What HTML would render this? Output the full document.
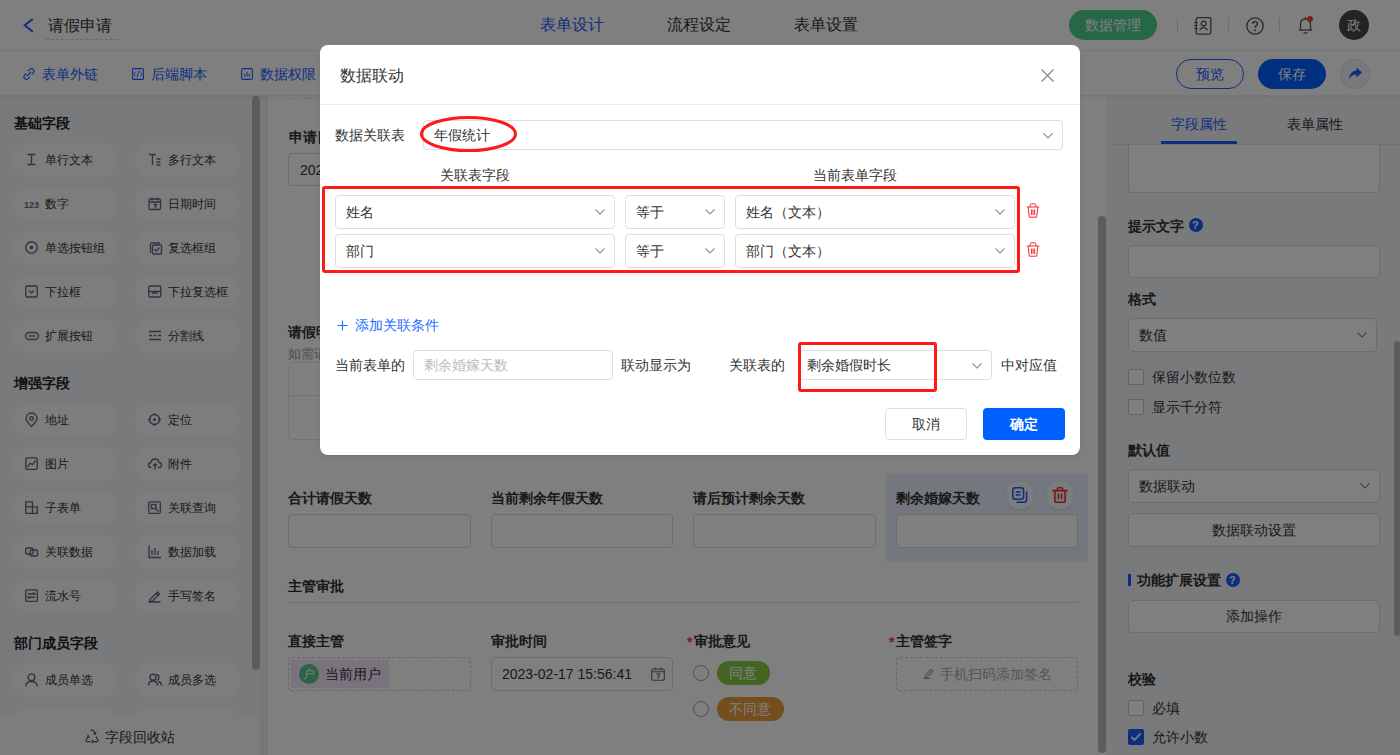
<!DOCTYPE html>
<html><head><meta charset="utf-8">
<style>
*{box-sizing:border-box;margin:0;padding:0}
html,body{width:1400px;height:755px;overflow:hidden;background:#fff;font-family:"Liberation Sans",sans-serif;color:#333}
.a{position:absolute}
.t{position:absolute;white-space:nowrap;line-height:14px;font-size:14px}
.b{font-weight:bold}
svg{position:absolute;overflow:visible}
#header{left:0;top:0;width:1400px;height:50px;background:#fff}
#toolbar{left:0;top:50px;width:1400px;height:46px;background:#fff}
#left{left:0;top:96px;width:260px;height:659px;background:#f3f4f7}
#strip{left:260px;top:96px;width:8px;height:659px;background:#eceef3}
#canvas{left:268px;top:96px;width:838px;height:659px;background:#fff}
#right{left:1106px;top:96px;width:294px;height:659px;background:#f3f4f7}
.pill{position:absolute;width:105px;height:34px;border-radius:17px;background:#fbfbfc}
.pill .t{font-size:12px;line-height:12px;left:33px;top:11px;color:#333}
.pill svg{left:13px;top:10px}
.sec{position:absolute;left:14px;font-size:14px;font-weight:bold;line-height:14px;color:#222}
.inp{position:absolute;border:1px solid #d9d9d9;border-radius:4px;background:#fff}
.mask{position:absolute;left:0;top:0;width:1400px;height:755px;background:rgba(0,0,0,.5)}
#modal{left:320px;top:45px;width:760px;height:410px;background:#fff;border-radius:8px;box-shadow:0 2px 4px -1px rgba(0,0,0,.12)}
.sel{position:absolute;border:1px solid #dedede;border-radius:4px;background:#fff}
</style></head><body>

<!-- HEADER -->
<div id="header" class="a">
  <svg style="left:23px;top:18px" width="11" height="15" viewBox="0 0 11 15"><path d="M9.8 1 L1.8 7.3 L9.8 13.8" fill="none" stroke="#1a5cff" stroke-width="2.1"/></svg>
  <div class="t" style="left:48px;top:18px;font-size:16px;line-height:16px;color:#333">请假申请</div>
  <div class="a" style="left:46px;top:39px;width:72px;border-top:1px dashed #d4d4d4"></div>
  <div class="t" style="left:540px;top:17px;font-size:16px;line-height:16px;color:#1a5cff">表单设计</div>
  <div class="t" style="left:667px;top:17px;font-size:16px;line-height:16px;color:#333">流程设定</div>
  <div class="t" style="left:794px;top:17px;font-size:16px;line-height:16px;color:#333">表单设置</div>
  <div class="a" style="left:1069px;top:10px;width:88px;height:30px;border-radius:15px;background:#4ccf8f"></div>
  <div class="t" style="left:1085px;top:18px;color:#fff">数据管理</div>
  <div class="a" style="left:1177px;top:18px;width:1px;height:14px;background:#d9d9d9"></div>
  <svg style="left:1194px;top:17px" width="18" height="18" viewBox="0 0 18 18"><rect x="2.2" y="0.7" width="14.6" height="16.4" rx="1.6" fill="none" stroke="#555" stroke-width="1.3"/><circle cx="9.6" cy="6.6" r="2.4" fill="none" stroke="#555" stroke-width="1.3"/><path d="M5.6 13.2Q9.6 7.8 13.6 13.2" fill="none" stroke="#555" stroke-width="1.3"/><path d="M0.2 5.5h3.4M0.2 8.5h3.4M0.2 11.5h3.4" stroke="#555" stroke-width="1.2"/></svg>
  <div class="a" style="left:1228px;top:18px;width:1px;height:14px;background:#d9d9d9"></div>
  <svg style="left:1246px;top:17px" width="18" height="18" viewBox="0 0 18 18"><circle cx="9" cy="9" r="8.2" fill="none" stroke="#555" stroke-width="1.3"/><path d="M6.6 7 Q6.6 4.6 9 4.6 Q11.4 4.6 11.4 6.8 Q11.4 8.3 9.8 9 Q9 9.4 9 10.8" fill="none" stroke="#555" stroke-width="1.4"/><circle cx="9" cy="13.2" r="0.95" fill="#555"/></svg>
  <div class="a" style="left:1279px;top:18px;width:1px;height:14px;background:#d9d9d9"></div>
  <svg style="left:1298px;top:16px" width="16" height="18" viewBox="0 0 16 18"><path d="M7.5 1v1.5M2.5 14V8.5Q2.5 3 7.5 3Q12.5 3 12.5 8.5V14M0.8 14.2H14.2M5.5 16.8h4" fill="none" stroke="#555" stroke-width="1.3"/><circle cx="12" cy="3" r="3" fill="#e8413c"/></svg>
  <div class="a" style="left:1339px;top:10px;width:30px;height:30px;border-radius:15px;background:#464646"></div>
  <div class="t" style="left:1347px;top:18px;color:#fff">政</div>
</div>

<!-- TOOLBAR -->
<div id="toolbar" class="a">
  <svg style="left:23px;top:18px" width="12" height="12" viewBox="0 0 12 12"><path d="M5 3.2 L6.8 1.4 Q8.5 -0.2 10.3 1.4 Q11.9 3.2 10.3 5 L8.6 6.7 M7 8.8 L5.2 10.6 Q3.5 12.2 1.7 10.6 Q0.1 8.8 1.7 7 L3.4 5.3 M4 8 L8 4" fill="none" stroke="#1a5cff" stroke-width="1.1"/></svg>
  <div class="t" style="left:42px;top:17px;color:#1a5cff">表单外链</div>
  <svg style="left:132px;top:18px" width="12" height="12" viewBox="0 0 12 12"><rect x="0.6" y="0.6" width="10.8" height="10.8" rx="1" fill="none" stroke="#1a5cff" stroke-width="1.1"/><path d="M3.8 3.6 L1.8 6 L3.8 8.4 M8.2 3.6 L10.2 6 L8.2 8.4 M7 2.8 L5 9.2" fill="none" stroke="#1a5cff" stroke-width="0.9"/></svg>
  <div class="t" style="left:151px;top:17px;color:#1a5cff">后端脚本</div>
  <svg style="left:241px;top:18px" width="12" height="12" viewBox="0 0 12 12"><rect x="0.6" y="0.6" width="10.8" height="10.8" rx="1.5" fill="none" stroke="#1a5cff" stroke-width="1.1"/><path d="M3.8 6V8.8M6 3.8V8.8M8.2 5.5V8.8" stroke="#1a5cff" stroke-width="1"/></svg>
  <div class="t" style="left:260px;top:17px;color:#1a5cff">数据权限</div>
  <div class="a" style="left:1176px;top:9px;width:68px;height:30px;border-radius:15px;border:1px solid #1a5cff"></div>
  <div class="t" style="left:1196px;top:17px;color:#1a5cff">预览</div>
  <div class="a" style="left:1258px;top:9px;width:68px;height:30px;border-radius:15px;background:#0060ff"></div>
  <div class="t" style="left:1278px;top:17px;color:#fff">保存</div>
  <div class="a" style="left:1340px;top:9px;width:30px;height:30px;border-radius:15px;background:#eef2fb;border:1px solid #dde3f0"></div>
  <svg style="left:1348px;top:17px" width="15" height="14" viewBox="0 0 15 14"><path d="M8.5 0.5 L14 5.5 L8.5 10.5 V7.5 Q3 7.5 1 12.5 Q1.5 4 8.5 3.5 Z" fill="#1a5cff"/></svg>
</div>

<div class="a" style="left:0;top:50px;width:1400px;height:1px;background:#ebebeb"></div>
<!-- LEFT PANEL -->
<div id="left" class="a">
  <div class="sec" style="top:20px">基础字段</div>
  <div class="sec" style="top:280px">增强字段</div>
  <div class="sec" style="top:540px">部门成员字段</div>
  <div class="pill" style="left:12px;top:47px"><svg width="14" height="14" viewBox="0 0 14 14"><path d="M2.5 1.5h8M2.5 11.5h8M6.5 1.5v10" stroke="#5b6785" stroke-width="1.35" fill="none"/></svg><div class="t">单行文本</div></div>
  <div class="pill" style="left:135px;top:47px"><svg width="14" height="14" viewBox="0 0 14 14"><path d="M1 1.5h7M4.5 1.5v10.5M8.5 6h4M8.5 9h4M8.5 12h4" stroke="#5b6785" stroke-width="1.35" fill="none"/></svg><div class="t">多行文本</div></div>
  <div class="pill" style="left:12px;top:91px"><svg width="14" height="14" viewBox="0 0 14 14"><text x="-1" y="10.5" font-size="9" font-weight="bold" font-family="Liberation Sans" fill="#5b6785">123</text></svg><div class="t">数字</div></div>
  <div class="pill" style="left:135px;top:91px"><svg width="14" height="14" viewBox="0 0 14 14"><rect x="1" y="2" width="11.5" height="10.5" rx="1.5" stroke="#5b6785" stroke-width="1.35" fill="none"/><path d="M1 5h11.5M4 0.5v3M9.5 0.5v3M5.5 7.5h3l-1.5 4" stroke="#5b6785" stroke-width="1.35" fill="none"/></svg><div class="t">日期时间</div></div>
  <div class="pill" style="left:12px;top:135px"><svg width="14" height="14" viewBox="0 0 14 14"><circle cx="6.5" cy="6.5" r="5.8" stroke="#5b6785" stroke-width="1.35" fill="none"/><circle cx="6.5" cy="6.5" r="1.8" fill="#5b6785"/></svg><div class="t">单选按钮组</div></div>
  <div class="pill" style="left:135px;top:135px"><svg width="14" height="14" viewBox="0 0 14 14"><path d="M2.5 12V3.5Q2.5 2 4 2H12" stroke="#5b6785" stroke-width="1.35" fill="none"/><rect x="4.5" y="4" width="9" height="9" rx="1" stroke="#5b6785" stroke-width="1.35" fill="none"/><path d="M6.5 8.3l1.8 1.8 3.2-3.5" stroke="#5b6785" stroke-width="1.35" fill="none"/></svg><div class="t">复选框组</div></div>
  <div class="pill" style="left:12px;top:179px"><svg width="14" height="14" viewBox="0 0 14 14"><rect x="0.8" y="1" width="11.5" height="11" rx="1.5" stroke="#5b6785" stroke-width="1.35" fill="none"/><path d="M4 5.5l2.5 2.5 2.5-2.5" stroke="#5b6785" stroke-width="1.35" fill="none"/></svg><div class="t">下拉框</div></div>
  <div class="pill" style="left:135px;top:179px"><svg width="14" height="14" viewBox="0 0 14 14"><rect x="0.8" y="1" width="12" height="11" rx="1.5" stroke="#5b6785" stroke-width="1.35" fill="none"/><path d="M0.8 6.5h12M4 9l1.5-1.2h2.5l1.5 1.2" stroke="#5b6785" stroke-width="1.35" fill="none"/></svg><div class="t">下拉复选框</div></div>
  <div class="pill" style="left:12px;top:223px"><svg width="14" height="14" viewBox="0 0 14 14"><rect x="0.5" y="3.5" width="13" height="7" rx="3.5" stroke="#5b6785" stroke-width="1.35" fill="none"/><path d="M4 7h6" stroke="#5b6785" stroke-width="1.35" fill="none"/></svg><div class="t">扩展按钮</div></div>
  <div class="pill" style="left:135px;top:223px"><svg width="14" height="14" viewBox="0 0 14 14"><path d="M1 2.5h12M1 6.5h3M5.5 6.5h3M10 6.5h3M1 10.5h12" stroke="#5b6785" stroke-width="1.35" fill="none"/></svg><div class="t">分割线</div></div>
  <div class="pill" style="left:12px;top:307px"><svg width="14" height="14" viewBox="0 0 14 14"><path d="M6.5 13.5Q1 8 1 5.5A5.5 5.5 0 0 1 12 5.5Q12 8 6.5 13.5Z" stroke="#5b6785" stroke-width="1.35" fill="none"/><circle cx="6.5" cy="5.5" r="1.8" stroke="#5b6785" stroke-width="1.35" fill="none"/></svg><div class="t">地址</div></div>
  <div class="pill" style="left:135px;top:307px"><svg width="14" height="14" viewBox="0 0 14 14"><circle cx="6.5" cy="6.5" r="5" stroke="#5b6785" stroke-width="1.35" fill="none"/><circle cx="6.5" cy="6.5" r="1.5" fill="#5b6785"/><path d="M6.5 0v2.5M6.5 10.5v2.5M0 6.5h2.5M10.5 6.5h2.5" stroke="#5b6785" stroke-width="1.35" fill="none"/></svg><div class="t">定位</div></div>
  <div class="pill" style="left:12px;top:351px"><svg width="14" height="14" viewBox="0 0 14 14"><rect x="0.8" y="0.8" width="11.5" height="11.5" rx="1.5" stroke="#5b6785" stroke-width="1.35" fill="none"/><path d="M2.6 9.8L5.2 6.2L7.6 7.6L10.6 3.4" stroke="#5b6785" stroke-width="1.35" fill="none"/></svg><div class="t">图片</div></div>
  <div class="pill" style="left:135px;top:351px"><svg width="14" height="14" viewBox="0 0 14 14"><path d="M3.5 10.5H3Q0.5 10.5 0.5 8Q0.5 5.5 3 5.5Q3.5 2 7 2Q10.5 2 11 5.5Q13.5 5.8 13.5 8Q13.5 10.5 11 10.5H10M7 12.5V7M5 8.8l2-2 2 2" stroke="#5b6785" stroke-width="1.35" fill="none"/></svg><div class="t">附件</div></div>
  <div class="pill" style="left:12px;top:395px"><svg width="14" height="14" viewBox="0 0 14 14"><path d="M0.8 0.8H7.5V5.8H0.8ZM0.8 5.8H12.3V12.3H0.8ZM7.5 5.8V12.3" stroke="#5b6785" stroke-width="1.35" fill="none"/></svg><div class="t">子表单</div></div>
  <div class="pill" style="left:135px;top:395px"><svg width="14" height="14" viewBox="0 0 14 14"><rect x="0.8" y="0.8" width="11.5" height="11.5" rx="1" stroke="#5b6785" stroke-width="1.35" fill="none"/><rect x="3.5" y="3.5" width="4.5" height="4" stroke="#5b6785" stroke-width="1.35" fill="none"/><path d="M7 7l3.5 3.5" stroke="#5b6785" stroke-width="1.35" fill="none"/></svg><div class="t">关联查询</div></div>
  <div class="pill" style="left:12px;top:439px"><svg width="14" height="14" viewBox="0 0 14 14"><rect x="0.6" y="3" width="7.5" height="6" rx="1.5" stroke="#5b6785" stroke-width="1.35" fill="none"/><rect x="5" y="5" width="7.5" height="6" rx="1.5" stroke="#5b6785" stroke-width="1.35" fill="none"/></svg><div class="t">关联数据</div></div>
  <div class="pill" style="left:135px;top:439px"><svg width="14" height="14" viewBox="0 0 14 14"><path d="M1 0.5v12h12M4 5v5M7 3v7M10 6v4" stroke="#5b6785" stroke-width="1.35" fill="none"/></svg><div class="t">数据加载</div></div>
  <div class="pill" style="left:12px;top:483px"><svg width="14" height="14" viewBox="0 0 14 14"><rect x="0.8" y="0.8" width="11.5" height="11.5" rx="1" stroke="#5b6785" stroke-width="1.35" fill="none"/><path d="M3 5H10L8.2 3.4M10 8.2H3L4.8 9.8" stroke="#5b6785" stroke-width="1.35" fill="none"/></svg><div class="t">流水号</div></div>
  <div class="pill" style="left:135px;top:483px"><svg width="14" height="14" viewBox="0 0 14 14"><path d="M2 10.5L9.5 3l2 2L4 12.5H2zM8 4.5l2 2M0.5 13h12" stroke="#5b6785" stroke-width="1.35" fill="none"/></svg><div class="t">手写签名</div></div>
  <div class="pill" style="left:12px;top:567px"><svg width="14" height="14" viewBox="0 0 14 14"><circle cx="6.5" cy="4.2" r="3.3" stroke="#5b6785" stroke-width="1.35" fill="none"/><path d="M0.8 13.5Q0.8 8.5 6.5 8.5Q12.2 8.5 12.2 13.5" stroke="#5b6785" stroke-width="1.35" fill="none"/></svg><div class="t">成员单选</div></div>
  <div class="pill" style="left:135px;top:567px"><svg width="14" height="14" viewBox="0 0 14 14"><circle cx="5" cy="4.2" r="3" stroke="#5b6785" stroke-width="1.35" fill="none"/><path d="M0.5 12.5Q0.5 8 5 8Q9.5 8 9.5 12.5M8.5 1.5Q11 2 11 4.5Q11 6.5 9 7.3M10.5 8.5Q13.5 9.5 13.5 12.5" stroke="#5b6785" stroke-width="1.35" fill="none"/></svg><div class="t">成员多选</div></div>
  <div class="pill" style="left:12px;top:611px"></div>
  <div class="pill" style="left:135px;top:611px"></div>
  <div class="a" style="left:252px;top:0;width:8px;height:574px;border-radius:4px;background:#b9b9b9"></div>
  <div class="a" style="left:0;top:621px;width:260px;height:38px;background:#fbfbfc"></div>
  <svg style="left:85px;top:633px" width="14" height="14" viewBox="0 0 14 14"><path d="M5.6 1.6Q7 -0.2 8.4 1.6L10.2 4.6M11 7.6L12.8 10.6Q13.6 12.6 11.6 12.6H8.5M5.5 12.6H2.4Q0.4 12.6 1.2 10.6L3 7.6M8.6 4.9l1.9.2.6-1.8M6.8 11l1.6 1.6-1.6 1.4M3.2 5.4l-.2 2.2 1.9.6" fill="none" stroke="#555" stroke-width="1.1"/></svg>
  <div class="t" style="left:105px;top:634px">字段回收站</div>
</div>
<div id="strip" class="a"></div>
<div id="canvas" class="a"></div>
<!-- CANVAS CONTENT (page coords) -->
<div class="a" style="left:289px;top:98px;width:789px;border-top:1px dashed #dcdcdc"></div>
<div class="t b" style="left:289px;top:130px">申请日期</div>
<div class="inp" style="left:288px;top:153px;width:183px;height:33px"></div>
<div class="t" style="left:300px;top:163px">2023-02-17</div>
<div class="t b" style="left:288px;top:325px">请假明细</div>
<div class="t" style="left:288px;top:347px;font-size:13px;line-height:13px;color:#999">如需请假多天请添加</div>
<div class="inp" style="left:288px;top:362px;width:790px;height:78px;border-radius:4px;border-color:#e6e6e6"></div>
<div class="a" style="left:289px;top:395px;width:788px;height:1px;background:#e6e6e6"></div>

<div class="a" style="left:886px;top:474px;width:202px;height:88px;background:#e9f0fd"></div>
<div class="t b" style="left:288px;top:491px">合计请假天数</div>
<div class="t b" style="left:491px;top:491px">当前剩余年假天数</div>
<div class="t b" style="left:693px;top:491px">请后预计剩余天数</div>
<div class="t b" style="left:896px;top:491px">剩余婚嫁天数</div>
<div class="inp" style="left:288px;top:514px;width:183px;height:34px"></div>
<div class="inp" style="left:491px;top:514px;width:182px;height:34px"></div>
<div class="inp" style="left:693px;top:514px;width:183px;height:34px"></div>
<div class="inp" style="left:896px;top:514px;width:182px;height:34px"></div>
<div class="a" style="left:1006px;top:481px;width:28px;height:28px;border-radius:14px;background:#f7f8fa;box-shadow:0 1px 3px rgba(0,0,0,.12)"></div>
<svg style="left:1012px;top:487px" width="16" height="16" viewBox="0 0 16 16"><rect x="0.8" y="0.8" width="10.8" height="11.4" rx="2.5" fill="none" stroke="#1a5cff" stroke-width="1.5"/><path d="M3.8 5h4.8M3.8 8h4.8M14.6 4.5V12.5Q14.6 15.2 12 15.2H4.5" fill="none" stroke="#1a5cff" stroke-width="1.5"/></svg>
<div class="a" style="left:1046px;top:481px;width:28px;height:28px;border-radius:14px;background:#f7f8fa;box-shadow:0 1px 3px rgba(0,0,0,.12)"></div>
<svg style="left:1052px;top:487px" width="16" height="16" viewBox="0 0 16 16"><path d="M5.3 3.2V2.2Q5.3 0.8 6.7 0.8H9.3Q10.7 0.8 10.7 2.2V3.2M0.3 3.6H15.7M2.9 3.6V13.4Q2.9 15.2 4.7 15.2H11.3Q13.1 15.2 13.1 13.4V3.6M6.4 6.6V12.2M9.6 6.6V12.2" fill="none" stroke="#f02a2a" stroke-width="1.6"/></svg>

<div class="t b" style="left:288px;top:579px">主管审批</div>
<div class="a" style="left:288px;top:602px;width:790px;height:1px;background:#dcdcdc"></div>
<div class="t b" style="left:288px;top:634px">直接主管</div>
<div class="t b" style="left:491px;top:634px">审批时间</div>
<div class="t b" style="left:694px;top:634px"><span style="color:#e53935;position:absolute;left:-7px;top:1px">*</span>审批意见</div>
<div class="t b" style="left:896px;top:634px"><span style="color:#e53935;position:absolute;left:-7px;top:1px">*</span>主管签字</div>
<div class="a" style="left:288px;top:657px;width:183px;height:34px;border:1px dashed #cfcfcf;border-radius:4px"></div>
<div class="a" style="left:291px;top:660px;width:98px;height:28px;background:#f3e6fd;border-radius:2px"></div>
<div class="a" style="left:299px;top:664px;width:20px;height:20px;border-radius:10px;background:#5fc28a"></div>
<div class="t" style="left:303px;top:668px;font-size:12px;line-height:12px;color:#fff">户</div>
<div class="t" style="left:325px;top:667px">当前用户</div>
<div class="inp" style="left:491px;top:657px;width:182px;height:34px"></div>
<div class="t" style="left:502px;top:667px;font-size:14px">2023-02-17 15:56:41</div>
<svg style="left:651px;top:667px" width="14" height="14" viewBox="0 0 14 14"><rect x="0.7" y="2" width="12.6" height="11.3" rx="1.5" fill="none" stroke="#666" stroke-width="1.1"/><path d="M0.7 4.8h12.6M4 0.5v3M10 0.5v3M5.2 7h3.4l-1.8 4.5" fill="none" stroke="#666" stroke-width="1.1"/></svg>
<div class="a" style="left:693px;top:665px;width:16px;height:16px;border-radius:8px;border:1px solid #9aa0b0;background:#fff"></div>
<div class="a" style="left:717px;top:661px;width:53px;height:24px;border-radius:12px;background:#86c844"></div>
<div class="t" style="left:729px;top:666px;color:#fff">同意</div>
<div class="a" style="left:693px;top:701px;width:16px;height:16px;border-radius:8px;border:1px solid #9aa0b0;background:#fff"></div>
<div class="a" style="left:717px;top:697px;width:67px;height:24px;border-radius:12px;background:#eb9c3c"></div>
<div class="t" style="left:729px;top:702px;color:#fff">不同意</div>
<div class="a" style="left:896px;top:657px;width:182px;height:34px;border:1px dashed #cfcfcf;border-radius:4px"></div>
<svg style="left:923px;top:667px" width="12" height="12" viewBox="0 0 12 12"><path d="M2 9L8 2.5l1.8 1.8L3.5 10.5H2zM0.5 11.5h7" fill="none" stroke="#999" stroke-width="1.1"/></svg>
<div class="t" style="left:940px;top:667px;color:#aaa">手机扫码添加签名</div>
<div class="a" style="left:1098px;top:216px;width:8px;height:537px;border-radius:4px;background:#b9b9b9"></div>
<div id="right" class="a"></div>
<!-- RIGHT PANEL (page coords) -->
<div class="t" style="left:1171px;top:117px;color:#1a5cff">字段属性</div>
<div class="t" style="left:1287px;top:117px;color:#333">表单属性</div>
<div class="a" style="left:1114px;top:144px;width:286px;height:1px;background:#dfe1e6"></div>
<div class="a" style="left:1161px;top:141px;width:76px;height:3px;background:#1a5cff"></div>
<div class="inp" style="left:1128px;top:145px;width:252px;height:48px;border-top:none;border-radius:0 0 4px 4px"></div>
<div class="t b" style="left:1128px;top:219px">提示文字</div>
<div class="a" style="left:1189px;top:218px;width:14px;height:14px;border-radius:7px;background:#1a5cff"></div>
<div class="t b" style="left:1192px;top:220px;font-size:11px;line-height:11px;color:#fff">?</div>
<div class="inp" style="left:1128px;top:245px;width:252px;height:33px"></div>
<div class="t b" style="left:1128px;top:292px">格式</div>
<div class="inp" style="left:1128px;top:318px;width:249px;height:34px"></div>
<div class="t" style="left:1139px;top:328px">数值</div>
<svg style="left:1357px;top:332px" width="10" height="6" viewBox="0 0 10 6"><path d="M0.5 0.5L5 5L9.5 0.5" fill="none" stroke="#888" stroke-width="1.1"/></svg>
<div class="a" style="left:1128px;top:369px;width:16px;height:16px;border:1px solid #c4c7cf;background:#fff;border-radius:2px"></div>
<div class="t" style="left:1152px;top:370px">保留小数位数</div>
<div class="a" style="left:1128px;top:399px;width:16px;height:16px;border:1px solid #c4c7cf;background:#fff;border-radius:2px"></div>
<div class="t" style="left:1152px;top:400px">显示千分符</div>
<div class="t b" style="left:1128px;top:443px">默认值</div>
<div class="inp" style="left:1128px;top:469px;width:252px;height:34px"></div>
<div class="t" style="left:1139px;top:479px">数据联动</div>
<svg style="left:1360px;top:483px" width="10" height="6" viewBox="0 0 10 6"><path d="M0.5 0.5L5 5L9.5 0.5" fill="none" stroke="#888" stroke-width="1.1"/></svg>
<div class="inp" style="left:1128px;top:513px;width:252px;height:34px"></div>
<div class="t" style="left:1212px;top:523px">数据联动设置</div>
<div class="a" style="left:1128px;top:574px;width:3px;height:12px;background:#1a5cff"></div>
<div class="t b" style="left:1137px;top:573px">功能扩展设置</div>
<div class="a" style="left:1226px;top:573px;width:14px;height:14px;border-radius:7px;background:#1a5cff"></div>
<div class="t b" style="left:1229px;top:575px;font-size:11px;line-height:11px;color:#fff">?</div>
<div class="inp" style="left:1128px;top:600px;width:252px;height:33px"></div>
<div class="t" style="left:1226px;top:609px">添加操作</div>
<div class="t b" style="left:1128px;top:672px">校验</div>
<div class="a" style="left:1128px;top:700px;width:16px;height:16px;border:1px solid #c4c7cf;background:#fff;border-radius:2px"></div>
<div class="t" style="left:1152px;top:701px">必填</div>
<div class="a" style="left:1128px;top:729px;width:16px;height:16px;background:#1a5cff;border-radius:2px"></div>
<svg style="left:1130px;top:732px" width="12" height="10" viewBox="0 0 12 10"><path d="M1.5 5L4.5 8L10.5 1.5" fill="none" stroke="#fff" stroke-width="1.8"/></svg>
<div class="t" style="left:1152px;top:730px">允许小数</div>
<div class="a" style="left:1394px;top:341px;width:6px;height:295px;border-radius:3px;background:#b9b9b9"></div>

<div class="a" style="left:0;top:95px;width:1400px;height:4px;background:linear-gradient(rgba(0,0,0,.07),rgba(0,0,0,0))"></div>
<div class="mask"></div>

<!-- MODAL -->
<div id="modal" class="a">
  <div class="t" style="left:20px;top:23px;font-size:16px;line-height:16px;color:#333">数据联动</div>
  <svg style="left:721px;top:24px" width="13" height="13" viewBox="0 0 13 13"><path d="M0.5 0.5L12.5 12.5M12.5 0.5L0.5 12.5" stroke="#888" stroke-width="1.3"/></svg>
  <div class="a" style="left:0;top:59px;width:760px;height:1px;background:#ebebeb"></div>
  <div class="t" style="left:15px;top:83px">数据关联表</div>
  <div class="sel" style="left:103px;top:75px;width:640px;height:30px"></div>
  <div class="t" style="left:114px;top:83px">年假统计</div>
  <svg style="left:723px;top:88px" width="10" height="6" viewBox="0 0 10 6"><path d="M0.5 0.5L5 5L9.5 0.5" fill="none" stroke="#8a8f99" stroke-width="1.1"/></svg>
  <div class="t" style="left:120px;top:123px">关联表字段</div>
  <div class="t" style="left:493px;top:123px">当前表单字段</div>
  <div class="sel" style="left:15px;top:150px;width:280px;height:34px"></div>
  <div class="sel" style="left:305px;top:150px;width:100px;height:34px"></div>
  <div class="sel" style="left:415px;top:150px;width:280px;height:34px"></div>
  <div class="t" style="left:26px;top:160px">姓名</div>
  <div class="t" style="left:316px;top:160px">等于</div>
  <div class="t" style="left:426px;top:160px">姓名（文本）</div>
  <svg style="left:275px;top:164px" width="10" height="6" viewBox="0 0 10 6"><path d="M0.5 0.5L5 5L9.5 0.5" fill="none" stroke="#8a8f99" stroke-width="1.1"/></svg><svg style="left:385px;top:164px" width="10" height="6" viewBox="0 0 10 6"><path d="M0.5 0.5L5 5L9.5 0.5" fill="none" stroke="#8a8f99" stroke-width="1.1"/></svg><svg style="left:675px;top:164px" width="10" height="6" viewBox="0 0 10 6"><path d="M0.5 0.5L5 5L9.5 0.5" fill="none" stroke="#8a8f99" stroke-width="1.1"/></svg>
  <svg style="left:706px;top:158px" width="14" height="15" viewBox="0 0 14 15"><path d="M0.8 4h12.4M4.2 4V2.2Q4.2 0.8 5.6 0.8h2.8Q9.8 0.8 9.8 2.2V4M2.2 4l1.1 10.2h7.4L11.8 4M5.4 6.5v5.5M7 6.5v5.5M8.6 6.5v5.5" fill="none" stroke="#f0282d" stroke-width="1"/></svg>
  <div class="sel" style="left:15px;top:189px;width:280px;height:34px"></div>
  <div class="sel" style="left:305px;top:189px;width:100px;height:34px"></div>
  <div class="sel" style="left:415px;top:189px;width:280px;height:34px"></div>
  <div class="t" style="left:26px;top:199px">部门</div>
  <div class="t" style="left:316px;top:199px">等于</div>
  <div class="t" style="left:426px;top:199px">部门（文本）</div>
  <svg style="left:275px;top:203px" width="10" height="6" viewBox="0 0 10 6"><path d="M0.5 0.5L5 5L9.5 0.5" fill="none" stroke="#8a8f99" stroke-width="1.1"/></svg><svg style="left:385px;top:203px" width="10" height="6" viewBox="0 0 10 6"><path d="M0.5 0.5L5 5L9.5 0.5" fill="none" stroke="#8a8f99" stroke-width="1.1"/></svg><svg style="left:675px;top:203px" width="10" height="6" viewBox="0 0 10 6"><path d="M0.5 0.5L5 5L9.5 0.5" fill="none" stroke="#8a8f99" stroke-width="1.1"/></svg>
  <svg style="left:706px;top:197px" width="14" height="15" viewBox="0 0 14 15"><path d="M0.8 4h12.4M4.2 4V2.2Q4.2 0.8 5.6 0.8h2.8Q9.8 0.8 9.8 2.2V4M2.2 4l1.1 10.2h7.4L11.8 4M5.4 6.5v5.5M7 6.5v5.5M8.6 6.5v5.5" fill="none" stroke="#f0282d" stroke-width="1"/></svg>
  <div class="a" style="left:2px;top:141px;width:698px;height:87px;border:3px solid #ff1a1a;border-radius:3px"></div>
  <svg style="left:17px;top:275px" width="11" height="11" viewBox="0 0 11 11"><path d="M5.5 0.5v10M0.5 5.5h10" stroke="#1a6cff" stroke-width="1.1"/></svg>
  <div class="t" style="left:35px;top:273px;color:#1a6cff">添加关联条件</div>
  <div class="t" style="left:15px;top:313px">当前表单的</div>
  <div class="sel" style="left:93px;top:305px;width:200px;height:30px"></div>
  <div class="t" style="left:104px;top:313px;color:#bbb">剩余婚嫁天数</div>
  <div class="t" style="left:301px;top:313px">联动显示为</div>
  <div class="t" style="left:409px;top:313px">关联表的</div>
  <div class="sel" style="left:479px;top:305px;width:193px;height:30px"></div>
  <div class="t" style="left:487px;top:313px">剩余婚假时长</div>
  <svg style="left:652px;top:318px" width="10" height="6" viewBox="0 0 10 6"><path d="M0.5 0.5L5 5L9.5 0.5" fill="none" stroke="#8a8f99" stroke-width="1.1"/></svg>
  <div class="t" style="left:681px;top:313px">中对应值</div>
  <div class="a" style="left:478px;top:297px;width:139px;height:50px;border:3px solid #ff1a1a;border-radius:3px"></div>
  <div class="sel" style="left:565px;top:363px;width:82px;height:32px"></div>
  <div class="t" style="left:592px;top:372px">取消</div>
  <div class="a" style="left:663px;top:363px;width:82px;height:32px;border-radius:4px;background:#0060ff"></div>
  <div class="t b" style="left:690px;top:372px;color:#fff">确定</div>
  <svg style="left:100px;top:71px" width="97" height="36" viewBox="0 0 97 36"><ellipse cx="48.5" cy="18" rx="47" ry="16.6" fill="none" stroke="#ff1a1a" stroke-width="3"/></svg>
</div>

</body></html>
